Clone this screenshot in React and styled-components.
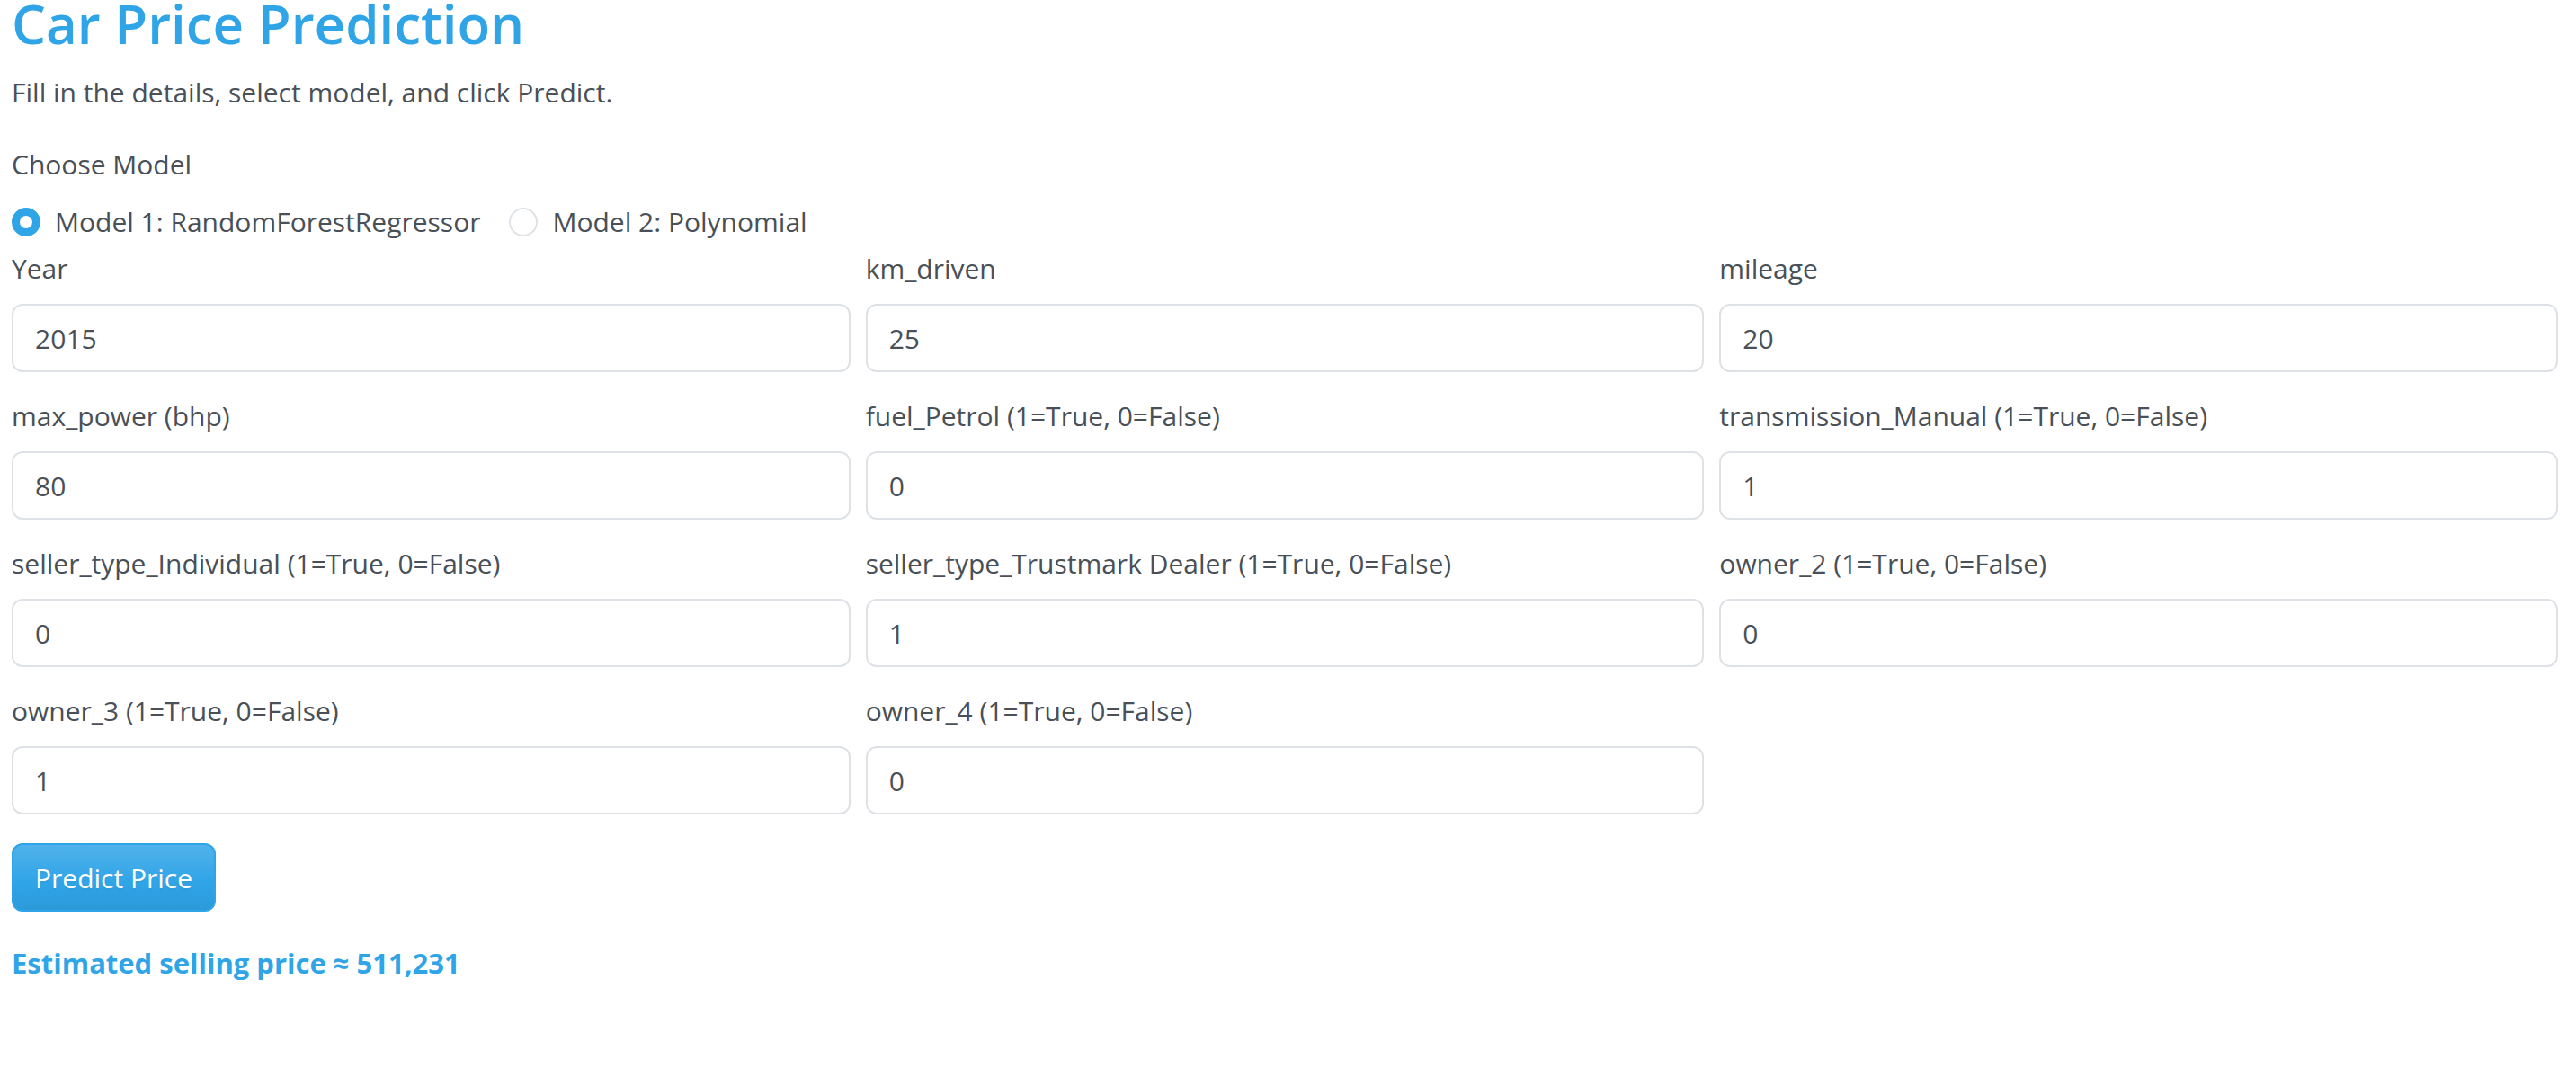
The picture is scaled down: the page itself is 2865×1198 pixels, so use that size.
import React, { useState } from "react";
import styled, { createGlobalStyle } from "styled-components";

const color = {
  primary: "#2fa4e7",
  text: "#495057",
  border: "#dee2e6",
};

const GlobalStyle = createGlobalStyle`
  *, *::before, *::after { box-sizing: border-box; }
  body {
    margin: 0;
    background: #fff;
    color: ${color.text};
    font: 400 30px/50px "Open Sans", "Noto Sans", sans-serif;
  }
`;

const Page = styled.main`
  padding: 0 20px 32px 13px;
`;

const Title = styled.h1`
  margin: 0 0 26px;
  color: ${color.primary};
  font-size: 60px;
  font-weight: 600;
  line-height: 52px;
`;

const Intro = styled.p`
  margin: 0 0 30px;
`;

const ModelGroup = styled.fieldset`
  margin: 0 0 2px;
  padding: 0;
  border: 0;
`;

const Legend = styled.legend`
  margin-bottom: 14px;
  padding: 0;
`;

const Choices = styled.div`
  display: flex;
  flex-wrap: wrap;
  column-gap: 32px;
`;

const Choice = styled.label`
  display: flex;
  align-items: center;
  gap: 16px;
`;

const Radio = styled.input`
  appearance: none;
  flex: none;
  width: 32px;
  height: 32px;
  margin: 0;
  border: 2px solid ${color.border};
  border-radius: 50%;
  background: #fff;

  &:checked {
    border: 9px solid ${color.primary};
  }
`;

const Fields = styled.div`
  display: grid;
  grid-template-columns: repeat(3, minmax(0, 1fr));
  gap: 24px 17px;
  margin-bottom: 32px;
`;

const Field = styled.div`
  display: flex;
  flex-direction: column;
  gap: 14px;
`;

const NumberInput = styled.input`
  appearance: textfield;
  width: 100%;
  height: 76px;
  padding: 11px 24px;
  border: 2px solid ${color.border};
  border-radius: 12px;
  background: #fff;
  color: inherit;
  font: inherit;

  &::-webkit-inner-spin-button {
    appearance: none;
    margin: 0;
  }
`;

const PredictButton = styled.button`
  display: block;
  margin: 0 0 32px;
  padding: 12px 24px 10px;
  border: 2px solid ${color.primary};
  border-radius: 12px;
  background: linear-gradient(180deg, #50b2eb, ${color.primary} 60%, #2c9ad9) ${color.primary};
  color: #fff;
  font: inherit;
  text-shadow: 0 2px 2px rgba(0, 0, 0, 0.05);
  cursor: pointer;
`;

const Result = styled.output`
  display: block;
  color: ${color.primary};
  font-size: 31px;
  font-weight: 700;
`;

const models = [
  { id: "forest", label: "Model 1: RandomForestRegressor" },
  { id: "poly", label: "Model 2: Polynomial" },
];

const fields = [
  { id: "year", label: "Year", value: 2015 },
  { id: "km_driven", label: "km_driven", value: 25 },
  { id: "mileage", label: "mileage", value: 20 },
  { id: "max_power", label: "max_power (bhp)", value: 80 },
  { id: "fuel_petrol", label: "fuel_Petrol (1=True, 0=False)", value: 0 },
  { id: "transmission_manual", label: "transmission_Manual (1=True, 0=False)", value: 1 },
  { id: "seller_individual", label: "seller_type_Individual (1=True, 0=False)", value: 0 },
  { id: "seller_trustmark", label: "seller_type_Trustmark Dealer (1=True, 0=False)", value: 1 },
  { id: "owner_2", label: "owner_2 (1=True, 0=False)", value: 0 },
  { id: "owner_3", label: "owner_3 (1=True, 0=False)", value: 1 },
  { id: "owner_4", label: "owner_4 (1=True, 0=False)", value: 0 },
];

export default function App() {
  const [model, setModel] = useState("forest");

  return (
    <>
      <GlobalStyle />
      <Page>
        <Title>Car Price Prediction</Title>
        <Intro>Fill in the details, select model, and click Predict.</Intro>
        <form onSubmit={(event) => event.preventDefault()}>
          <ModelGroup>
            <Legend>Choose Model</Legend>
            <Choices>
              {models.map(({ id, label }) => (
                <Choice key={id} htmlFor={id}>
                  <Radio
                    type="radio"
                    name="model"
                    id={id}
                    value={id}
                    checked={model === id}
                    onChange={() => setModel(id)}
                  />
                  {label}
                </Choice>
              ))}
            </Choices>
          </ModelGroup>
          <Fields>
            {fields.map(({ id, label, value }) => (
              <Field key={id}>
                <label htmlFor={id}>{label}</label>
                <NumberInput type="number" id={id} name={id} defaultValue={value} />
              </Field>
            ))}
          </Fields>
          <PredictButton type="submit">Predict Price</PredictButton>
          <Result>Estimated selling price ≈ 511,231</Result>
        </form>
      </Page>
    </>
  );
}
